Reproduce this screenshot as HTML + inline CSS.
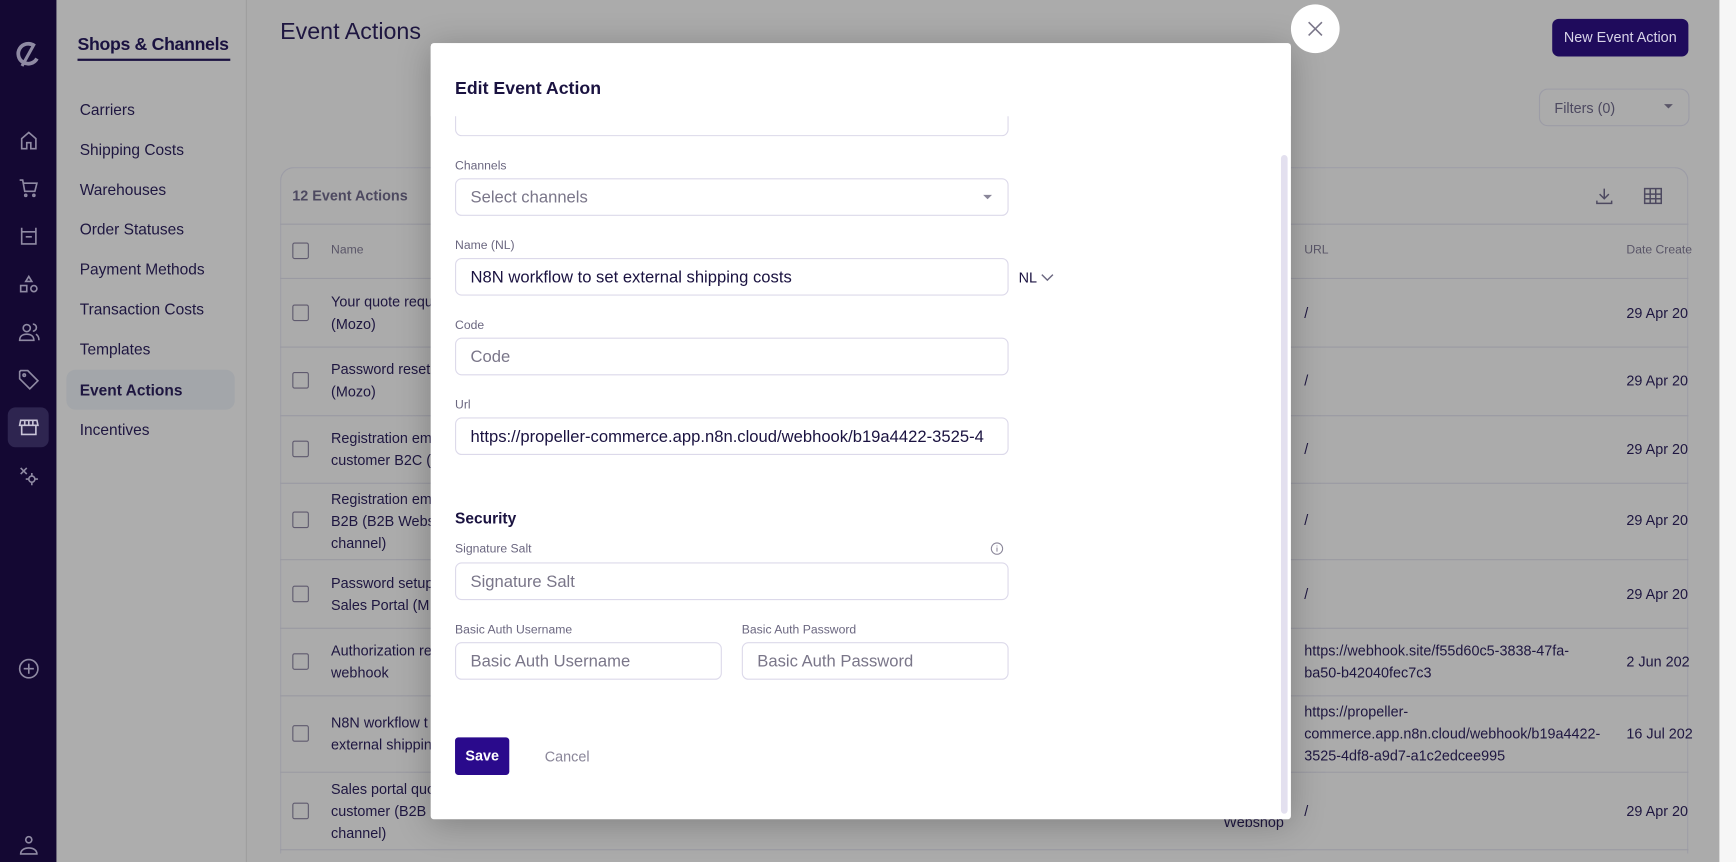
<!DOCTYPE html>
<html><head><meta charset="utf-8"><style>
*{box-sizing:border-box;margin:0;padding:0}
html,body{width:1736px;height:862px;overflow:hidden;background:#ababab}
#w{position:absolute;left:0;top:0;width:1568px;height:779px;transform:scale(1.107143);transform-origin:0 0;font-family:"Liberation Sans",sans-serif;color:#1a1240;background:#ababab}
.a{position:absolute}
.nav{left:0;top:0;width:51px;height:779px;background:#140833}
.side{left:51px;top:0;width:172px;height:779px;background:#adadad;border-right:1px solid #9e9e9e}
.side .it{position:absolute;left:21px;font-size:14px;color:#1e1640}
.ico{position:absolute;left:15px;width:22px;height:22px}
.t{font-size:13px;color:#1e1640;line-height:20px}
.row{position:absolute;left:253px;width:1272px;border-top:1px solid #9a9aa2}
.cb{position:absolute;left:264px;width:15px;height:15px;border:1.5px solid #5f5a6e;border-radius:2px}
.modal{left:389px;top:39px;width:777px;height:701px;background:#fff;border-radius:3px;overflow:hidden;box-shadow:0 4px 30px rgba(0,0,0,.25)}
.lbl{position:absolute;font-size:11px;color:#6b6780}
.inp{position:absolute;height:34px;border:1px solid #dcd9ea;border-radius:6px;font-size:15px;color:#7a7689;padding:9px 13px;line-height:16px;white-space:nowrap;overflow:hidden}
.inp.v{color:#1a1240}
</style></head><body><div id="w">
<div class="a nav">
<svg class="ico" style="top:36px;left:12px;width:27px;height:27px" viewBox="0 0 24 24"><path d="M16.5 4.5A8 8 0 1 0 19 15" fill="none" stroke="#8f8aa3" stroke-width="3"/><path d="M17 3L7 21" stroke="#8f8aa3" stroke-width="2.5"/></svg>
<svg class="ico" style="top:116px" viewBox="0 0 24 24" fill="none" stroke="#8f8aa3" stroke-width="1.6"><path d="M5 10l7-6 7 6v10H14v-6h-4v6H5z"/></svg>
<svg class="ico" style="top:159px" viewBox="0 0 24 24" fill="none" stroke="#8f8aa3" stroke-width="1.6"><path d="M3 4h3l2 11h10l2-8H7"/><circle cx="9" cy="19" r="1"/><circle cx="17" cy="19" r="1"/></svg>
<svg class="ico" style="top:202px" viewBox="0 0 24 24" fill="none" stroke="#8f8aa3" stroke-width="1.6"><path d="M5 4v16h14V4M5 8h14M9 13h6"/></svg>
<svg class="ico" style="top:246px" viewBox="0 0 24 24" fill="none" stroke="#8f8aa3" stroke-width="1.6"><path d="M12 4l3 5H9z"/><rect x="4" y="13" width="6" height="6"/><circle cx="17" cy="16" r="3"/></svg>
<svg class="ico" style="top:289px" viewBox="0 0 24 24" fill="none" stroke="#8f8aa3" stroke-width="1.6"><circle cx="10" cy="8" r="3.5"/><path d="M3 20c0-4 3-6 7-6s7 2 7 6zM16 4a3.5 3.5 0 0 1 0 7M19 14c2 1 3 3 3 6"/></svg>
<svg class="ico" style="top:332px" viewBox="0 0 24 24" fill="none" stroke="#8f8aa3" stroke-width="1.6"><path d="M3 4v7l10 10 8-8L11 3H4z"/><circle cx="7.5" cy="7.5" r="1.2"/></svg>
<div class="a" style="left:7px;top:368px;width:37px;height:36px;border-radius:7px;background:#2e2550"></div>
<svg class="ico" style="top:375px" viewBox="0 0 24 24" fill="none" stroke="#c9c5d8" stroke-width="1.6"><path d="M4 5h16l1 5H3zM5 10v9h14v-9M8 5v5M12 5v5M16 5v5"/></svg>
<svg class="ico" style="top:419px" viewBox="0 0 24 24" fill="none" stroke="#8f8aa3" stroke-width="1.6"><path d="M4 4l6 6M4 10l6-6"/><circle cx="15" cy="15" r="3"/><path d="M15 9v3M15 18v3M9 15h3M18 15h3"/></svg>
<svg class="ico" style="top:593px" viewBox="0 0 24 24" fill="none" stroke="#8f8aa3" stroke-width="1.6"><circle cx="12" cy="12" r="9"/><path d="M12 7v10M7 12h10"/></svg>
<svg class="ico" style="top:753px" viewBox="0 0 24 24" fill="none" stroke="#8f8aa3" stroke-width="1.6"><circle cx="12" cy="6" r="3"/><path d="M4 20c0-4 4-6 8-6s8 2 8 6z"/></svg>
</div>
<div class="a side">
<div class="a" style="left:19px;top:32px;font-size:16px;font-weight:bold;color:#1a1240;letter-spacing:-0.3px">Shops &amp; Channels</div>
<div class="a" style="left:19px;top:53px;width:138px;height:2px;background:#1a1240"></div>
<div class="it" style="top:91px">Carriers</div>
<div class="it" style="top:127px">Shipping Costs</div>
<div class="it" style="top:163px">Warehouses</div>
<div class="it" style="top:199px">Order Statuses</div>
<div class="it" style="top:235px">Payment Methods</div>
<div class="it" style="top:271px">Transaction Costs</div>
<div class="it" style="top:307px">Templates</div>
<div class="a" style="left:9px;top:334px;width:152px;height:36px;border-radius:8px;background:#a3a6aa"></div>
<div class="it" style="top:344px;font-weight:bold">Event Actions</div>
<div class="it" style="top:380px">Incentives</div>
</div>
<div class="a" style="left:253px;top:17px;font-size:21px;color:#1e1640">Event Actions</div>
<div class="a" style="left:1402px;top:17px;width:123px;height:34px;border-radius:6px;background:#1f0b5c;color:#d8d4e8;font-size:13px;line-height:34px;text-align:center">New Event Action</div>
<div class="a" style="left:1390px;top:80px;width:136px;height:34px;border:1px solid #9c9ca6;border-radius:8px;font-size:13px;color:#4d4960;padding:9px 13px">Filters (0)<span style="position:absolute;right:14px;top:13px;border:4px solid transparent;border-top-color:#5a5668"></span></div>
<div class="a" style="left:253px;top:151px;width:1272px;height:620px;border:1px solid #9c9ca6;border-bottom:none;border-radius:12px 12px 0 0"></div>
<div class="a" style="left:264px;top:169px;font-size:13px;font-weight:bold;color:#4d4960">12 Event Actions</div>
<svg class="a" style="left:1439px;top:167px" width="20" height="20" viewBox="0 0 24 24" fill="none" stroke="#4d4960" stroke-width="1.6"><path d="M12 4v11M7 10l5 5 5-5M4 17v3h16v-3"/></svg>
<svg class="a" style="left:1483px;top:167px" width="20" height="20" viewBox="0 0 24 24" fill="none" stroke="#4d4960" stroke-width="1.6"><rect x="3" y="4" width="18" height="16"/><path d="M3 10h18M3 15h18M9 4v16M15 4v16"/></svg>
<div class="row" style="top:202px"></div>
<div class="cb" style="top:219px"></div>
<div class="a" style="left:299px;top:220px;font-size:11px;color:#5a5668">Name</div>
<div class="a" style="left:1178px;top:220px;font-size:11px;color:#5a5668">URL</div>
<div class="a" style="left:1469px;top:220px;font-size:11px;color:#5a5668">Date Create</div>
<div class="row" style="top:251px"></div><div class="cb" style="top:275px"></div>
<div class="a t" style="left:299px;top:263px">Your quote requ<br>(Mozo)</div><div class="a t" style="left:1178px;top:273px">/</div><div class="a t" style="left:1469px;top:273px">29 Apr 20</div>
<div class="row" style="top:313px"></div><div class="cb" style="top:336px"></div>
<div class="a t" style="left:299px;top:324px">Password reset<br>(Mozo)</div><div class="a t" style="left:1178px;top:334px">/</div><div class="a t" style="left:1469px;top:334px">29 Apr 20</div>
<div class="row" style="top:375px"></div><div class="cb" style="top:398px"></div>
<div class="a t" style="left:299px;top:386px">Registration em<br>customer B2C (</div><div class="a t" style="left:1178px;top:396px">/</div><div class="a t" style="left:1469px;top:396px">29 Apr 20</div>
<div class="row" style="top:436px"></div><div class="cb" style="top:462px"></div>
<div class="a t" style="left:299px;top:441px">Registration em<br>B2B (B2B Webs<br>channel)</div><div class="a t" style="left:1178px;top:460px">/</div><div class="a t" style="left:1469px;top:460px">29 Apr 20</div>
<div class="row" style="top:505px"></div><div class="cb" style="top:529px"></div>
<div class="a t" style="left:299px;top:517px">Password setup<br>Sales Portal (M</div><div class="a t" style="left:1178px;top:527px">/</div><div class="a t" style="left:1469px;top:527px">29 Apr 20</div>
<div class="row" style="top:567px"></div><div class="cb" style="top:590px"></div>
<div class="a t" style="left:299px;top:578px">Authorization re<br>webhook</div><div class="a t" style="left:1178px;top:578px">https://webhook.site/f55d60c5-3838-47fa-<br>ba50-b42040fec7c3</div><div class="a t" style="left:1469px;top:588px">2 Jun 202</div>
<div class="row" style="top:628px"></div><div class="cb" style="top:655px"></div>
<div class="a t" style="left:299px;top:643px">N8N workflow t<br>external shippin</div><div class="a t" style="left:1178px;top:633px">https://propeller-<br>commerce.app.n8n.cloud/webhook/b19a4422-<br>3525-4df8-a9d7-a1c2edcee995</div><div class="a t" style="left:1469px;top:653px">16 Jul 202</div>
<div class="row" style="top:697px"></div><div class="cb" style="top:725px"></div>
<div class="a t" style="left:299px;top:703px">Sales portal quo<br>customer (B2B<br>channel)</div><div class="a t" style="left:1105px;top:733px">Webshop</div><div class="a t" style="left:1178px;top:723px">/</div><div class="a t" style="left:1469px;top:723px">29 Apr 20</div>
<div class="row" style="top:767px"></div>
<div class="a" style="left:1553px;top:0;width:15px;height:779px;background:#f6f6f6"></div>

<div class="a modal">
<div class="inp" style="left:22px;top:50px;width:500px;"></div>
<div class="a" style="left:0;top:0;width:777px;height:66px;background:#fff"></div>
<div class="a" style="left:22px;top:33px;font-size:16px;font-weight:bold;color:#1a1240">Edit Event Action</div>
<div class="lbl" style="left:22px;top:105px">Channels</div>
<div class="inp" style="left:22px;top:122px;width:500px">Select channels<span style="position:absolute;right:14px;top:14px;border:4px solid transparent;border-top-color:#8a8699"></span></div>
<div class="lbl" style="left:22px;top:177px">Name (NL)</div>
<div class="inp v" style="left:22px;top:194px;width:500px">N8N workflow to set external shipping costs</div>
<div class="a" style="left:531px;top:204px;font-size:13px;color:#1a1240">NL</div>
<svg class="a" style="left:551px;top:206px" width="12" height="10" viewBox="0 0 12 10"><path d="M1 3l5 5 5-5" fill="none" stroke="#6b6780" stroke-width="1.3"/></svg>
<div class="lbl" style="left:22px;top:249px">Code</div>
<div class="inp" style="left:22px;top:266px;width:500px">Code</div>
<div class="lbl" style="left:22px;top:321px">Url</div>
<div class="inp v" style="left:22px;top:338px;width:500px">https://propeller-commerce.app.n8n.cloud/webhook/b19a4422-3525-4</div>
<div class="a" style="left:22px;top:421px;font-size:14px;font-weight:bold;color:#1a1240">Security</div>
<div class="lbl" style="left:22px;top:451px">Signature Salt</div>
<svg class="a" style="left:505px;top:450px" width="13" height="13" viewBox="0 0 14 14" fill="none" stroke="#8a8699" stroke-width="1"><circle cx="7" cy="7" r="5.5"/><path d="M7 6v4M7 4v.8"/></svg>
<div class="inp" style="left:22px;top:469px;width:500px">Signature Salt</div>
<div class="lbl" style="left:22px;top:524px">Basic Auth Username</div>
<div class="inp" style="left:22px;top:541px;width:241px">Basic Auth Username</div>
<div class="lbl" style="left:281px;top:524px">Basic Auth Password</div>
<div class="inp" style="left:281px;top:541px;width:241px">Basic Auth Password</div>
<div class="a" style="left:22px;top:627px;width:49px;height:34px;border-radius:3px;background:#2a0a8c;color:#fff;font-size:13px;font-weight:bold;line-height:34px;text-align:center">Save</div>
<div class="a" style="left:103px;top:637px;font-size:13px;color:#8a8699">Cancel</div>
<div class="a" style="left:768px;top:101px;width:6px;height:595px;border-radius:3px;background:#e3e0ef"></div>
</div>
<div class="a" style="left:1166px;top:4px;width:44px;height:44px;border-radius:50%;background:#fff"></div>
<svg class="a" style="left:1181px;top:19px" width="14" height="14" viewBox="0 0 14 14"><path d="M1 1l12 12M13 1L1 13" stroke="#7a7689" stroke-width="1.4"/></svg>
</div></body></html>
